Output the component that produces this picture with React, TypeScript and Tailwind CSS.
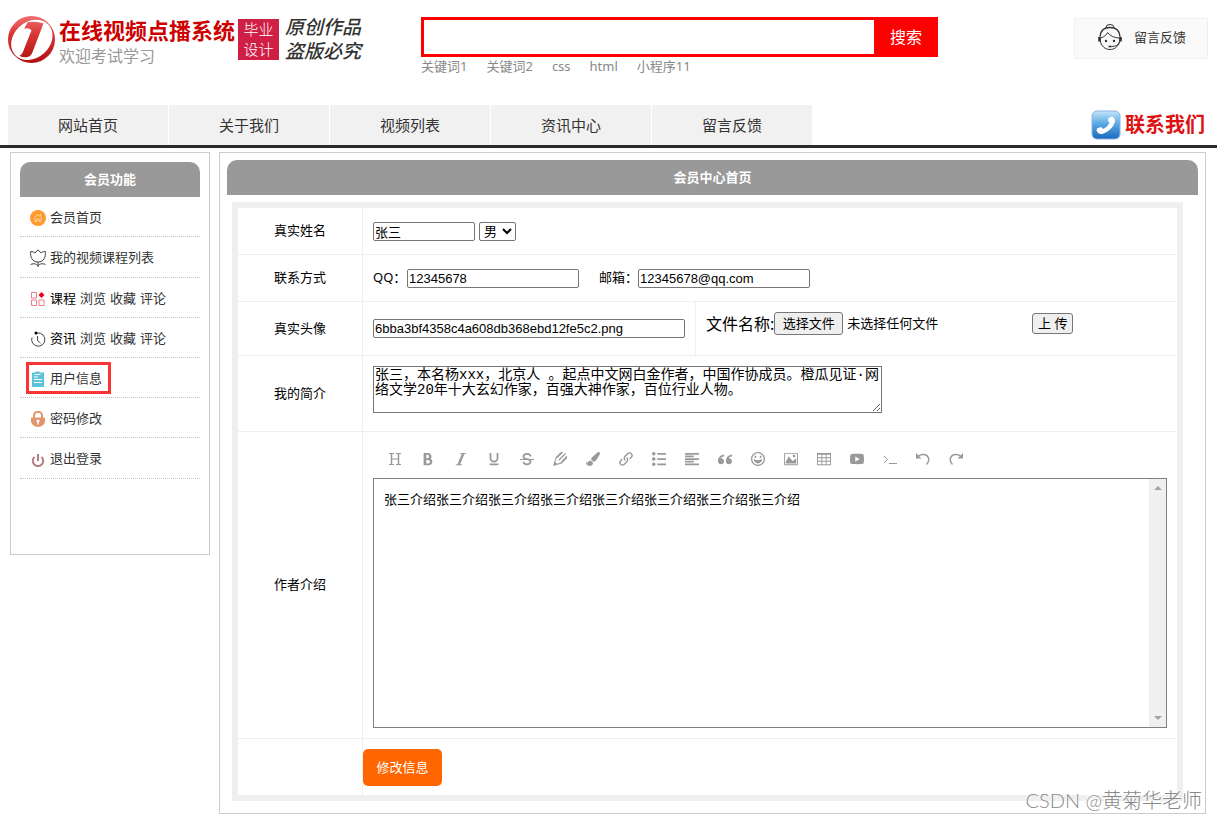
import React from 'react'
import {
  ImBold,
  ImItalic,
  ImUnderline,
  ImStrikethrough,
  ImPencil2,
  ImLink,
  ImList2,
  ImParagraphLeft,
  ImQuotesLeft,
  ImHappy,
  ImImage,
  ImTable2,
  ImPlay,
} from 'react-icons/im'
import { FaPaintBrush } from 'react-icons/fa'

const navItems = ['网站首页', '关于我们', '视频列表', '资讯中心', '留言反馈']
const keywords = ['关键词1', '关键词2', 'css', 'html', '小程序11']

const inputClass =
  "h-[19px] rounded-xs border border-[#767676] bg-white px-px text-[13px] leading-4 text-black font-['Liberation_Sans','Noto_Sans_CJK_SC',sans-serif]"
const buttonClass = 'rounded-[3px] border border-[#767676] bg-[#efefef] text-[13px] text-black'

function LogoMark() {
  return (
    <svg viewBox="0 0 48 48" className="h-[47px] w-[47px] shrink-0" aria-hidden="true">
      <defs>
        <linearGradient id="logoRed" gradientUnits="userSpaceOnUse" x1="0" y1="0" x2="0" y2="48">
          <stop offset="0" stopColor="#f07070" />
          <stop offset="0.4" stopColor="#d83434" />
          <stop offset="1" stopColor="#b01010" />
        </linearGradient>
      </defs>
      <circle cx="24" cy="24" r="24" fill="url(#logoRed)" />
      <ellipse cx="24" cy="24.5" rx="23" ry="18.5" transform="rotate(-42 24 24)" fill="#fff" />
      <path
        d="M20 6.500Q28 5 36 7.500L35 11L25 37Q23 42 19 42Q15 42.500 11.500 40.500Q14 40 15.500 36L24 14.500Q21 11.500 16.500 13Z"
        fill="url(#logoRed)"
      />
    </svg>
  )
}

function ServiceIcon() {
  return (
    <svg viewBox="0 0 24 28" className="h-7 w-6" fill="none" stroke="#333" strokeWidth="1" aria-hidden="true">
      <path d="M8 3.500a4 3 0 0 1 8 0" />
      <path d="M2 12.500C2.500 6 7 3.500 12 3.500S21.500 6 22 12.500" strokeWidth="1.400" />
      <path d="M2 12.500v3.500C3 22 7 25.500 12 25.500S21 22 22 16v-3.500" />
      <path d="M3 14C6.500 12.500 9 10.500 9.500 8.500C12 12 17 14 21 14" />
      <path d="M1.500 13v4.500M22.500 13v4.500" strokeWidth="2.600" />
      <path d="M21.500 18c-1 3-4 4.500-8 4.500" />
      <path d="M10.500 22.500h3" strokeWidth="1.600" />
      <circle cx="8" cy="17" r="1.200" fill="#333" stroke="none" />
      <circle cx="16" cy="17" r="1.200" fill="#333" stroke="none" />
    </svg>
  )
}

function PhoneIcon() {
  return (
    <svg viewBox="0 0 30 30" className="h-[30px] w-[30px]" aria-hidden="true">
      <defs>
        <linearGradient id="phoneBlue" x1="0" y1="0" x2="0" y2="1">
          <stop offset="0" stopColor="#c4e4f8" />
          <stop offset="0.45" stopColor="#5aabe4" />
          <stop offset="1" stopColor="#1a68be" />
        </linearGradient>
      </defs>
      <rect x="1" y="1" width="28" height="28" rx="5" fill="url(#phoneBlue)" stroke="#8ab4e0" />
      <path
        d="M17.500 8L21 6.500Q24.500 8 24 12Q21 20.500 11.500 24Q7 24.500 5.500 20.500L6 18.500L10 17L12.500 19Q17 16.500 18.500 13L17 11Z"
        fill="#fff"
      />
    </svg>
  )
}

function HomeIcon() {
  return (
    <svg viewBox="0 0 16 16" className="h-4 w-4" aria-hidden="true">
      <circle cx="8" cy="8" r="8" fill="#ff9a2e" />
      <path d="M4 8l4-3.500L12 8M5 8v3.500h2V9h2v2.500h2V8M10.500 4v2" fill="none" stroke="#ffd9ae" strokeWidth="0.9" />
    </svg>
  )
}

function TulipIcon() {
  return (
    <svg viewBox="0 0 16 18" className="h-[18px] w-4" fill="none" stroke="#444" strokeWidth="1" aria-hidden="true">
      <path d="M0.600 2.500C2.500 2.500 4 3 5 4L8 0.800L11 4C12 3 13.500 2.500 15.400 2.500C15.800 8 14 13 8 13C2 13 0.200 8 0.600 2.500Z" />
      <path d="M8 13v5M0.500 15.500C4 14 7 15 8 17C9 15 12 14 15.500 15.500" />
    </svg>
  )
}

function CourseIcon() {
  return (
    <svg viewBox="0 0 16 16" className="h-4 w-4" fill="none" stroke="#ee7d86" strokeWidth="1" aria-hidden="true">
      <path d="M1.500 1.500h5v5.500h-5zM1.500 9h5v5.500h-5zM9 9h5v5.500h-5z" />
      <path d="M11.500 1L14.500 4L11.500 7L8.500 4Z" fill="#e60012" stroke="none" />
    </svg>
  )
}

function ClockIcon() {
  return (
    <svg viewBox="0 0 16 16" className="h-4 w-4" fill="none" stroke="#444" strokeWidth="1" aria-hidden="true">
      <path d="M5.500 2H8A6.600 6.600 0 1 1 2 6.500M7.500 5v4.500l3 2.500" />
      <circle cx="6" cy="2" r="1.500" fill="#000" stroke="none" />
    </svg>
  )
}

function ClipboardIcon() {
  return (
    <svg viewBox="0 0 16 16" className="h-4 w-4" aria-hidden="true">
      <path d="M2 1.500h3.500V0.500h4V1.500H14V16H2Z" fill="#5cc3d8" />
      <path d="M4.500 3.500h6M4 6h4M4 8.500h8M4 11.500h8" stroke="#fff" strokeWidth="1.100" />
    </svg>
  )
}

function LockIcon() {
  return (
    <svg viewBox="0 0 16 16" className="h-4 w-4" aria-hidden="true">
      <path d="M4 7V4.500a4 3.800 0 0 1 8 0V7" fill="none" stroke="#e0956a" strokeWidth="2" />
      <path d="M1 6.500h14v3.500a7 6 0 0 1-14 0Z" fill="#e0956a" />
      <circle cx="8" cy="10" r="1.600" fill="#fff" />
      <path d="M8 10v3.500" stroke="#fff" strokeWidth="1.400" />
    </svg>
  )
}

function PowerIcon() {
  return (
    <svg viewBox="0 0 16 16" className="h-4 w-4" fill="none" stroke="#b47f82" strokeWidth="2" aria-hidden="true">
      <path d="M4.500 6A5.200 5.200 0 1 0 11.500 6M8 3v7" />
    </svg>
  )
}

function HeadingIcon() {
  return (
    <svg viewBox="0 0 14 14" width="14" height="14" fill="none" stroke="currentColor" aria-hidden="true">
      <path d="M3.500 1.500v11M10.500 1.500v11" strokeWidth="1.500" />
      <path d="M3.500 7h7M1 1.500h5M8 1.500h5M1 12.500h5M8 12.500h5" strokeWidth="1" />
    </svg>
  )
}

function CodeIcon() {
  return (
    <svg viewBox="0 0 14 14" width="14" height="14" fill="none" stroke="currentColor" aria-hidden="true">
      <path d="M1 4l3.500 3.500L1 11M6 11.500h8" />
    </svg>
  )
}

function UndoIcon() {
  return (
    <svg viewBox="0 0 14 14" width="14" height="14" fill="none" stroke="currentColor" aria-hidden="true">
      <path d="M2.500 4C6 1.500 11 2 12.500 6C13.200 8.500 12.500 10.500 10.500 12.500" strokeWidth="1.500" />
      <path d="M0 1v5.500h5.500Z" fill="currentColor" stroke="none" />
    </svg>
  )
}

function RedoIcon() {
  return (
    <svg viewBox="0 0 14 14" width="14" height="14" fill="none" stroke="currentColor" aria-hidden="true">
      <path d="M11.500 4C8 1.500 3 2 1.500 6C0.800 8.500 1.500 10.500 3.500 12.500" strokeWidth="1.500" />
      <path d="M14 1v5.500H8.500Z" fill="currentColor" stroke="none" />
    </svg>
  )
}

const tools = [
  { name: '标题', Icon: HeadingIcon },
  { name: '粗体', Icon: ImBold },
  { name: '斜体', Icon: ImItalic },
  { name: '下划线', Icon: ImUnderline },
  { name: '删除线', Icon: ImStrikethrough },
  { name: '文字颜色', Icon: ImPencil2 },
  { name: '背景色', Icon: FaPaintBrush },
  { name: '链接', Icon: ImLink },
  { name: '列表', Icon: ImList2 },
  { name: '对齐方式', Icon: ImParagraphLeft },
  { name: '引用', Icon: ImQuotesLeft },
  { name: '表情', Icon: ImHappy },
  { name: '图片', Icon: ImImage },
  { name: '表格', Icon: ImTable2 },
  { name: '视频', Icon: ImPlay },
  { name: '代码', Icon: CodeIcon },
  { name: '撤销', Icon: UndoIcon },
  { name: '重复', Icon: RedoIcon },
]

const menu = [
  { Icon: HomeIcon, links: ['会员首页'], height: 'h-10' },
  { Icon: TulipIcon, links: ['我的视频课程列表'], height: 'h-[41px]' },
  { Icon: CourseIcon, title: '课程', links: ['浏览', '收藏', '评论'], height: 'h-10' },
  { Icon: ClockIcon, title: '资讯', links: ['浏览', '收藏', '评论'], height: 'h-10' },
  { Icon: ClipboardIcon, links: ['用户信息'], height: 'h-10', active: true },
  { Icon: LockIcon, links: ['密码修改'], height: 'h-10' },
  { Icon: PowerIcon, links: ['退出登录'], height: 'h-[41px]' },
]

function Header() {
  return (
    <header className="flex h-[105px] items-start">
      <div className="flex w-[421px] shrink-0 pl-2 pt-4">
        <LogoMark />
        <div className="ml-1 w-[176px] whitespace-nowrap">
          <h1 className="text-[22px] font-bold leading-7 text-[#cc0000]">在线视频点播系统</h1>
          <p className="text-base leading-6 text-[#999]">欢迎考试学习</p>
        </div>
        <div className="ml-[3px] mt-[3px] h-[41px] w-[41px] bg-[#d01f45] text-center text-[15px] font-light leading-5 text-white">
          毕业
          <br />
          设计
        </div>
        <div className="ml-1.5 flex flex-col gap-0.5 text-[19px] font-medium italic leading-[22px] text-[#333]">
          <span>原创作品</span>
          <span>盗版必究</span>
        </div>
      </div>
      <div className="w-[517px] shrink-0 pt-[17px]">
        <form className="flex h-10">
          <input
            aria-label="搜索内容"
            className="min-w-0 flex-1 border-3 border-r-0 border-[#ff0000] px-2 outline-none"
          />
          <button type="button" className="w-16 bg-[#ff0000] text-base text-white">
            搜索
          </button>
        </form>
        <div className="flex gap-[19px] text-[13px] leading-[18px] text-[#888]">
          {keywords.map((word) => (
            <a key={word} href="#">
              {word}
            </a>
          ))}
        </div>
      </div>
      <a
        href="#"
        className="ml-auto mr-[9px] mt-[18px] flex h-[41px] w-[134px] items-center border border-[#f0f0f0] bg-[#fafafa] pb-0.5 pl-[23px] text-[13px] text-[#333]"
      >
        <ServiceIcon />
        <span className="ml-3">留言反馈</span>
      </a>
    </header>
  )
}

function Nav() {
  return (
    <nav className="flex h-[43px] border-b-3 border-[#2b2b2b] pl-2">
      {navItems.map((item) => (
        <a
          key={item}
          href="#"
          className="mr-px flex w-40 items-center justify-center bg-[#f1f1f1] text-[15px] text-[#333]"
        >
          {item}
        </a>
      ))}
      <a href="#" className="ml-auto mr-3 flex items-center gap-1 text-xl font-bold text-[#dd1111]">
        <PhoneIcon />
        联系我们
      </a>
    </nav>
  )
}

function Sidebar() {
  return (
    <aside className="min-h-[403px] w-[200px] shrink-0 border border-[#ccc] p-[9px]">
      <h2 className="h-[35px] rounded-t-[10px] bg-[#999] text-center text-[13px] font-bold leading-[35px] text-white">
        会员功能
      </h2>
      <ul>
        {menu.map(({ Icon, title, links, height, active }, i) => (
          <li
            key={i}
            className={`flex items-center border-b border-dotted border-[#c4c4c4] pl-2.5 pt-0.5 text-[13px] text-[#333] ${height}`}
          >
            <div className="relative flex items-center gap-1">
              <Icon />
              {title && <span className="text-black">{title}</span>}
              {links.map((link) => (
                <a key={link} href="#">
                  {link}
                </a>
              ))}
              {active && <span className="absolute -bottom-1.5 -left-1 -right-[9px] -top-[7px] border-3 border-[#f93434]" />}
            </div>
          </li>
        ))}
      </ul>
    </aside>
  )
}

function Editor() {
  return (
    <div>
      <div className="flex h-9 items-center pb-0.5 pl-[5px] text-[#999]">
        {tools.map(({ name, Icon }) => (
          <button key={name} type="button" aria-label={name} className="flex w-[33px] justify-center text-sm">
            <Icon />
          </button>
        ))}
      </div>
      <div className="flex h-[250px] border border-[#808080]">
        <div
          id="intro"
          role="textbox"
          aria-label="作者介绍"
          contentEditable
          suppressContentEditableWarning
          className="flex-1 px-2.5 py-2.5 text-[13px] leading-5 text-black outline-none"
        >
          张三介绍张三介绍张三介绍张三介绍张三介绍张三介绍张三介绍张三介绍
        </div>
        <div className="flex w-[17px] flex-col items-center justify-between bg-[#f0f0f0] py-[7px]">
          <svg viewBox="0 0 8 4" className="h-1 w-2" fill="#a3a3a3" aria-hidden="true">
            <path d="M0 4L4 0L8 4Z" />
          </svg>
          <svg viewBox="0 0 8 4" className="h-1 w-2" fill="#a3a3a3" aria-hidden="true">
            <path d="M0 0L4 4L8 0Z" />
          </svg>
        </div>
      </div>
    </div>
  )
}

const labelCell = 'w-[125px] border-b border-r border-[#efefef] text-center font-normal'
const fieldCell = 'border-b border-[#efefef] px-2.5'

function ProfileForm() {
  return (
    <div className="ml-[5px] mr-[15px] mt-[7px] border-6 border-[#efefef]">
      <table className="w-full table-fixed border-separate border-spacing-0 text-[13px] text-black">
        <colgroup>
          <col className="w-[125px]" />
          <col className="w-[333px]" />
          <col />
        </colgroup>
        <tbody>
          <tr className="h-[47px]">
            <th className={labelCell}>
              <label htmlFor="name">真实姓名</label>
            </th>
            <td colSpan={2} className={fieldCell}>
              <div className="flex items-center gap-1">
                <input id="name" defaultValue="张三" className={`w-[102px] ${inputClass}`} />
                <select
                  aria-label="性别"
                  className="h-[19px] w-[37px] rounded-xs border border-[#767676] bg-white text-[13px] leading-4 font-['Liberation_Sans','Noto_Sans_CJK_SC',sans-serif]"
                >
                  <option>男</option>
                  <option>女</option>
                </select>
              </div>
            </td>
          </tr>
          <tr className="h-[47px]">
            <th className={labelCell}>联系方式</th>
            <td colSpan={2} className={fieldCell}>
              <div className="flex items-center">
                <label htmlFor="qq" className="w-[34px]">
                  QQ：
                </label>
                <input id="qq" defaultValue="12345678" className={`w-[172px] ${inputClass}`} />
                <label htmlFor="email" className="ml-5">
                  邮箱：
                </label>
                <input id="email" defaultValue="12345678@qq.com" className={`w-[172px] ${inputClass}`} />
              </div>
            </td>
          </tr>
          <tr className="h-[54px]">
            <th className={labelCell}>
              <label htmlFor="avatar">真实头像</label>
            </th>
            <td className="border-b border-r border-[#efefef] px-2.5">
              <input
                id="avatar"
                defaultValue="6bba3bf4358c4a608db368ebd12fe5c2.png"
                className={`block w-full ${inputClass}`}
              />
            </td>
            <td className="border-b border-[#efefef] px-2.5 pb-2.5">
              <div className="relative flex items-center">
                <span className="text-base">文件名称:</span>
                <input id="file" type="file" className="sr-only" />
                <label htmlFor="file" className={`h-[23px] w-[69px] text-center leading-[21px] ${buttonClass}`}>
                  选择文件
                </label>
                <span className="ml-1 w-[185px]">未选择任何文件</span>
                <button type="button" className={`h-[21px] w-[41px] leading-[19px] ${buttonClass}`}>
                  上 传
                </button>
              </div>
            </td>
          </tr>
          <tr className="h-[76px]">
            <th className={labelCell}>
              <label htmlFor="bio">我的简介</label>
            </th>
            <td colSpan={2} className="border-b border-[#efefef] px-2.5 pb-2">
              <textarea
                id="bio"
                defaultValue="张三，本名杨xxx，北京人 。起点中文网白金作者，中国作协成员。橙瓜见证·网络文学20年十大玄幻作家，百强大神作家，百位行业人物。"
                className="block h-[47px] w-[509px] resize border border-[#767676] p-px text-sm leading-[15px] font-['Liberation_Mono','Noto_Sans_CJK_SC',monospace]"
              />
            </td>
          </tr>
          <tr>
            <th className={labelCell}>作者介绍</th>
            <td colSpan={2} className="border-b border-[#efefef] p-2.5">
              <Editor />
            </td>
          </tr>
          <tr>
            <td className="border-r border-[#efefef]" />
            <td colSpan={2} className="pb-[9px] pt-2.5">
              <button type="button" className="block h-[37px] w-[79px] rounded-[5px] bg-[#ff6600] text-[13px] text-white">
                修改信息
              </button>
            </td>
          </tr>
        </tbody>
      </table>
    </div>
  )
}

export default function App() {
  return (
    <div className="bg-white pb-1.5 font-['Noto_Sans','Noto_Sans_CJK_SC',sans-serif]">
      <Header />
      <Nav />
      <main className="ml-2.5 mr-[11px] mt-1 flex items-start gap-[9px]">
        <Sidebar />
        <section className="relative min-w-0 flex-1 border border-[#ccc] px-[7px] pb-3 pt-[7px]">
          <h2 className="h-[35px] rounded-t-[10px] bg-[#999] text-center text-[13px] font-bold leading-[35px] text-white">
            会员中心首页
          </h2>
          <ProfileForm />
          <span className="absolute bottom-0 right-[3px] whitespace-nowrap text-xl font-light leading-[26px] text-[#888] [text-shadow:-1px_-1px_0_#fff] font-['Lato','Noto_Sans_CJK_SC',sans-serif]">
            CSDN @黄菊华老师
          </span>
        </section>
      </main>
    </div>
  )
}
